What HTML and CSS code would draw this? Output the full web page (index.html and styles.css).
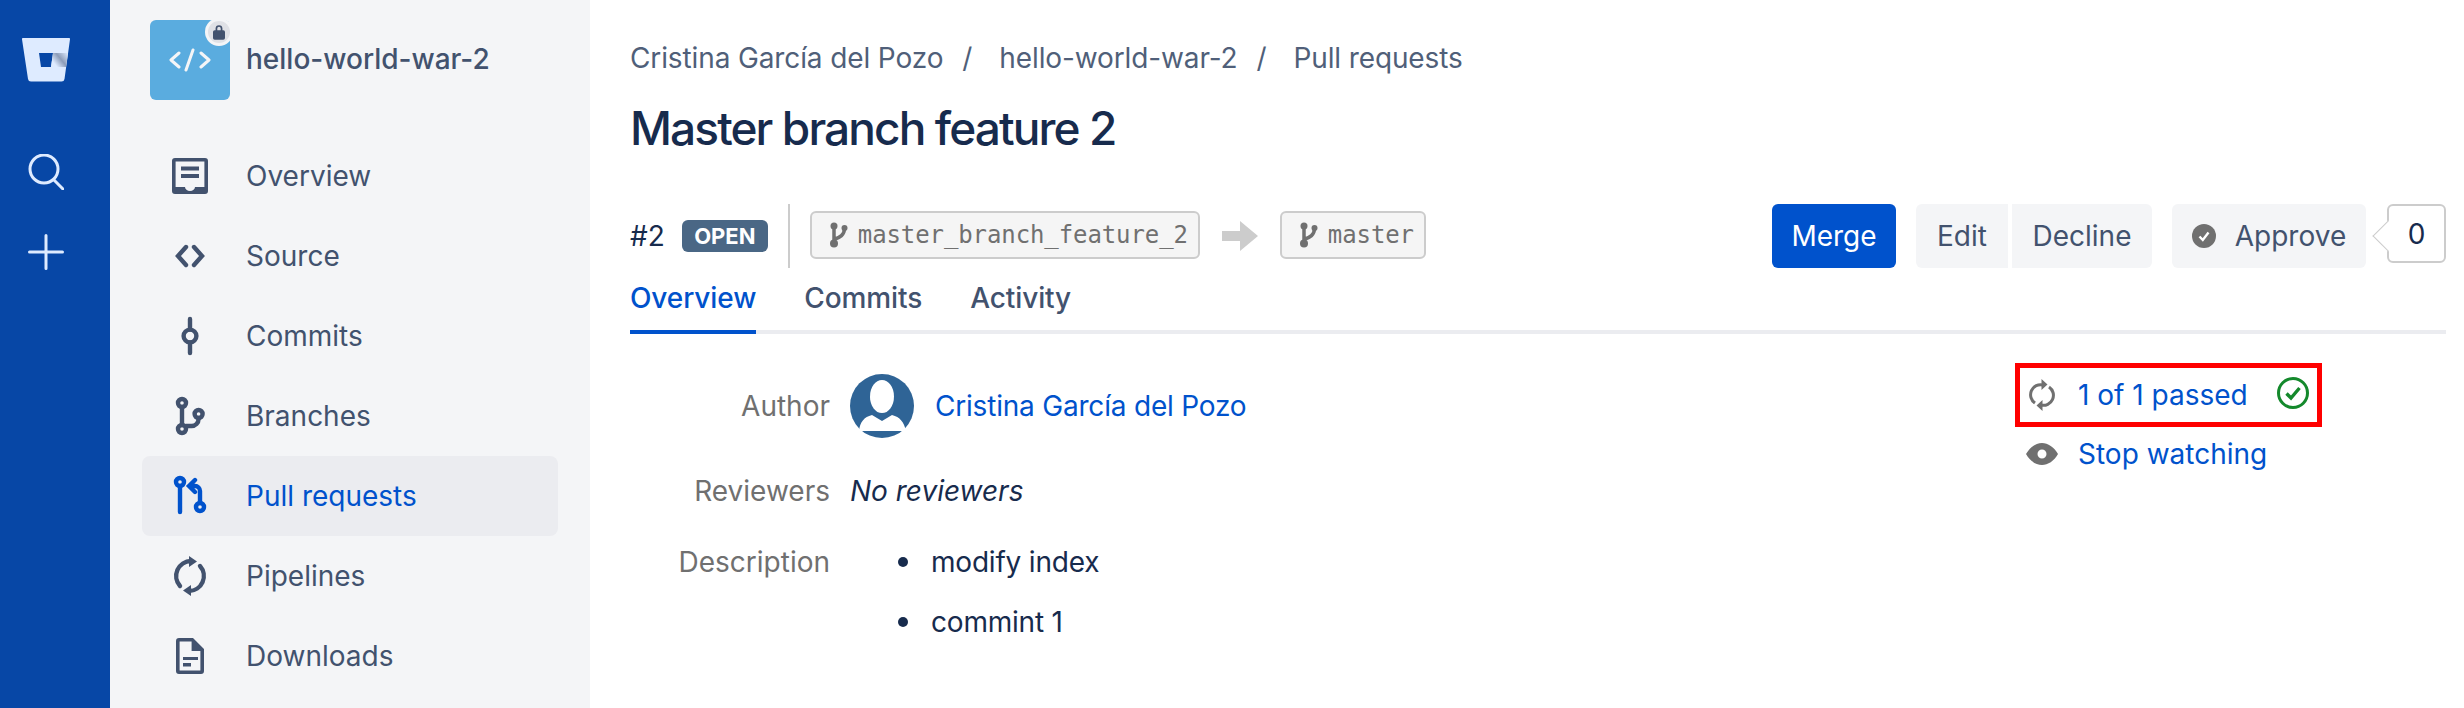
FILE: index.html
```html
<!DOCTYPE html>
<html lang="en">
<head>
  <meta charset="UTF-8" />
  <title>Master branch feature 2</title>
  <link rel="stylesheet" href="styles.css">
</head>
<body>
  <nav class="global-nav">
    <svg class="logo" width="48" height="44" viewBox="0 0 48 44">
      <defs>
        <linearGradient id="shade" x1="1" y1="0" x2="0.1" y2="0.6">
          <stop offset="0" stop-color="#deebff"/>
          <stop offset="0.55" stop-color="#8c9cb8"/>
          <stop offset="1" stop-color="#deebff"/>
        </linearGradient>
      </defs>
      <path fill="#deebff" fill-rule="evenodd" d="M1 0H47a1 1 0 0 1 1 1.200L42.500 41a3 3 0 0 1-3 2.500H9a3 3 0 0 1-3-2.500L0 1.200A1 1 0 0 1 1 0ZM17 15 19 29H29L31 15Z"/>
      <path fill="url(#shade)" d="M31 15H46L44 29H29Z"/>
    </svg>
    <svg class="nav-search" width="36" height="36" viewBox="0 0 36 36" fill="none" stroke="#deebff" stroke-width="3">
      <circle cx="16" cy="15" r="14"/>
      <path d="M26 26 35 35" stroke-linecap="round"/>
    </svg>
    <svg class="nav-plus" width="36" height="36" viewBox="0 0 36 36" fill="none" stroke="#deebff" stroke-width="3" stroke-linecap="round">
      <path d="M18 1.500V34.500M1.500 18H34.500"/>
    </svg>
  </nav>

  <aside class="sidebar">
    <div class="repo">
      <div class="repo-icon">
        <svg width="42" height="24" viewBox="0 0 42 24" fill="none" stroke="#f4f5f7" stroke-width="3" stroke-linecap="round" stroke-linejoin="round">
          <path d="M10 5 2 12 10 19M32 5 40 12 32 19M24 2 17 22"/>
        </svg>
        <span class="lock-badge">
          <svg width="12" height="16" viewBox="0 0 14 18">
            <path fill="none" stroke="#42526e" stroke-width="2" d="M4 8V5a3 3 0 0 1 6 0V8"/>
            <rect y="7" width="14" height="11" rx="2" fill="#42526e"/>
          </svg>
        </span>
      </div>
      <span class="repo-name">hello-world-war-2</span>
    </div>

    <ul class="side-menu">
      <li class="side-item">
        <svg class="side-icon" viewBox="0 0 24 24">
          <path fill-rule="evenodd" d="M4.500 3H19.500A1.500 1.500 0 0 1 21 4.500V19.500A1.500 1.500 0 0 1 19.500 21H4.500A1.500 1.500 0 0 1 3 19.500V4.500A1.500 1.500 0 0 1 4.500 3ZM4.800 4.800V17.500H9.500A2.500 2 0 0 0 14.500 17.500H19.200V4.800Z"/>
          <path d="M7.500 7.200H16.500V9.200H7.500ZM7.500 11H16.500V13H7.500Z"/>
        </svg>
        Overview
      </li>
      <li class="side-item">
        <svg class="side-icon line" viewBox="0 0 24 24"><path d="M10 7.500 6 12 10 16.500M14 7.500 18 12 14 16.500"/></svg>
        Source
      </li>
      <li class="side-item">
        <svg class="side-icon line" viewBox="0 0 24 24"><circle cx="12" cy="12" r="3.200"/><path d="M12 3.500V8.800M12 15.200V20.500"/></svg>
        Commits
      </li>
      <li class="side-item">
        <svg class="side-icon line" viewBox="0 0 24 24"><circle cx="8" cy="5.500" r="2"/><circle cx="16.300" cy="11" r="2"/><circle cx="8" cy="18.500" r="2"/><path d="M8 7.500V16.500M16.300 13V13.500A3.500 3.500 0 0 1 12.800 17H10"/></svg>
        Branches
      </li>
      <li class="side-item active">
        <svg class="side-icon line" viewBox="0 0 24 24"><circle cx="7" cy="5" r="2"/><circle cx="17" cy="17.500" r="2"/><path d="M7 7V20M17 15.500V9.500A2.500 2.500 0 0 0 14.500 7H12M14.500 4 11.500 7 14.500 10"/></svg>
        Pull requests
      </li>
      <li class="side-item">
        <svg class="side-icon line" viewBox="0 0 24 24"><path d="M12.500 4.500A7.500 7.500 0 0 0 7 17M11.500 19.500A7.500 7.500 0 0 0 17 7"/><path class="solid" d="M11.500 2 15.500 4.700 11.500 7.500ZM12.500 16.500 8.500 19.300 12.500 22Z"/></svg>
        Pipelines
      </li>
      <li class="side-item">
        <svg class="side-icon" viewBox="0 0 24 24">
          <path fill-rule="evenodd" d="M6.500 3H13.500L19 8.500V19.500A1.500 1.500 0 0 1 17.500 21H6.500A1.500 1.500 0 0 1 5 19.500V4.500A1.500 1.500 0 0 1 6.500 3ZM6.800 4.800V19.200H17.200V9.500H12.800V4.800Z"/>
          <path d="M8.500 12.500H16V14H8.500ZM8.500 15.500H12.500V17.300H8.500Z"/>
        </svg>
        Downloads
      </li>
    </ul>
  </aside>

  <main class="content">
    <div class="breadcrumbs">
      <span>Cristina García del Pozo</span><span class="sep">/</span><span>hello-world-war-2</span><span class="sep">/</span><span>Pull requests</span>
    </div>
    <h1 class="pr-title">Master branch feature 2</h1>

    <div class="pr-bar">
      <span class="pr-id">#2</span>
      <span class="lozenge">OPEN</span>
      <span class="bar-divider"></span>
      <span class="branch-chip">
        <svg class="branch-icon" width="20" height="26" viewBox="0 0 20 26"><circle cx="5" cy="4" r="3.500"/><circle cx="15.500" cy="6" r="3"/><circle cx="5" cy="21.500" r="4"/><path d="M5 4V21M15.500 6C15.500 13 11 15.500 5 17.500"/></svg>
        master_branch_feature_2
      </span>
      <svg class="branch-arrow" width="36" height="30" viewBox="0 0 36 30"><path d="M0 10H18V0L36 15 18 30V20H0Z"/></svg>
      <span class="branch-chip">
        <svg class="branch-icon" width="20" height="26" viewBox="0 0 20 26"><circle cx="5" cy="4" r="3.500"/><circle cx="15.500" cy="6" r="3"/><circle cx="5" cy="21.500" r="4"/><path d="M5 4V21M15.500 6C15.500 13 11 15.500 5 17.500"/></svg>
        master
      </span>

      <div class="pr-actions">
        <button class="btn primary">Merge</button>
        <div class="btn-group">
          <button class="btn edit">Edit</button>
          <button class="btn decline">Decline</button>
        </div>
        <button class="btn approve">
          <svg width="24" height="24" viewBox="0 0 24 24"><circle cx="12" cy="12" r="12" fill="#707070"/><path d="M7.500 12.500 10.800 16 16.500 8.500" fill="none" stroke="#fff" stroke-width="2.400"/></svg>
          Approve
        </button>
        <span class="approve-count">0</span>
      </div>
    </div>

    <div class="tabs">
      <span class="tab active">Overview</span>
      <span class="tab">Commits</span>
      <span class="tab">Activity</span>
    </div>

    <div class="pr-body">
      <div class="details">
        <div class="detail-label author-label">Author</div>
        <div class="author">
          <svg width="64" height="64" viewBox="0 0 64 64">
            <circle cx="32" cy="32" r="32" fill="#2f6496"/>
            <ellipse cx="32" cy="22.500" rx="12" ry="16.500" fill="#fff"/>
            <path fill="#fff" d="M9 57C10 48 14 43 22 41L32 47 42 41C50 43 54 48 56 57Z"/>
          </svg>
          <a class="link author-name">Cristina García del Pozo</a>
        </div>
        <div class="detail-label">Reviewers</div>
        <div class="no-reviewers">No reviewers</div>
        <div class="detail-label">Description</div>
        <ul class="description">
          <li>modify index</li>
          <li>commint 1</li>
        </ul>
      </div>

      <div class="pr-side">
        <div class="build-status">
          <svg width="26" height="32" viewBox="0 0 26 32" fill="none" stroke="#707070" stroke-width="3">
            <path d="M14 6A10 10 0 0 0 6 24M12 26A10 10 0 0 0 20 8"/>
            <path fill="#707070" stroke="none" d="M12.500 0 18.500 5.500 12.500 11ZM13.500 21 7.500 26.500 13.500 32Z"/>
          </svg>
          <a class="link">1 of 1 passed</a>
          <svg class="status-ok" width="32" height="32" viewBox="0 0 32 32" fill="none" stroke="#14892c">
            <circle cx="16" cy="16" r="14.500" stroke-width="3"/>
            <path d="M9.500 16.500 14 21 22.500 11" stroke-width="3.400"/>
          </svg>
        </div>
        <div class="watch">
          <svg width="32" height="22" viewBox="0 0 32 22">
            <path fill="#707070" fill-rule="evenodd" d="M0 11C4 4 10 0 16 0S28 4 32 11C28 18 22 22 16 22S4 18 0 11ZM16 6.500A4.500 4.500 0 1 0 16 15.500 4.500 4.500 0 1 0 16 6.500Z"/>
          </svg>
          <a class="link">Stop watching</a>
        </div>
      </div>
    </div>
  </main>
</body>
</html>
```

FILE: styles.css
```css
* {
  box-sizing: border-box;
}

html, body {
  height: 100%;
}

body {
  margin: 0;
  display: flex;
  overflow: hidden;
  background: white;
  color: #172b4d;
  font-family: Inter, 'Liberation Sans', sans-serif;
  font-size: 28px;
  line-height: 36px;
}

/* far left blue bar */
.global-nav {
  width: 110px;
  flex-shrink: 0;
  background: #0747a6;
  display: flex;
  flex-direction: column;
  align-items: center;
  padding-top: 38px;
  padding-right: 18px;
}

.nav-search {
  margin-top: 72px;
}

.nav-plus {
  margin-top: 44px;
}

/* repo sidebar */
.sidebar {
  width: 480px;
  flex-shrink: 0;
  background: #f4f5f7;
  color: #42526e;
  padding: 20px 32px 0;
}

.repo {
  display: flex;
  align-items: center;
  gap: 16px;
  padding-left: 8px;
}

.repo-icon {
  position: relative;
  width: 80px;
  height: 80px;
  background: #5aacdf;
  border-radius: 6px;
  display: flex;
  align-items: center;
  justify-content: center;
}

.lock-badge {
  position: absolute;
  top: 1px;
  right: 0;
  width: 22px;
  height: 22px;
  border-radius: 50%;
  background: #dfe1e6;
  box-shadow: 0 0 0 3px #f4f5f7;
  display: flex;
  align-items: center;
  justify-content: center;
}

.repo-name {
  font-weight: 500;
  margin-top: -2px;
}

.side-menu {
  list-style: none;
  margin: 36px 0 0;
  padding: 0;
}

.side-item {
  height: 80px;
  display: flex;
  align-items: center;
  gap: 32px;
  padding-left: 24px;
  border-radius: 8px;
}

.side-item.active {
  background: #ebecf0;
  color: #0052cc;
}

.side-icon {
  width: 48px;
  height: 48px;
  flex-shrink: 0;
  fill: currentColor;
}

.side-icon.line {
  fill: none;
  stroke: currentColor;
  stroke-width: 2.200;
  stroke-linecap: round;
}

.side-icon .solid {
  fill: currentColor;
  stroke: none;
}

/* main column */
.content {
  flex: 1;
  min-width: 0;
  padding: 40px 18px 0 40px;
}

.breadcrumbs {
  color: #505f79;
  display: flex;
  letter-spacing: -0.12px;
}

.sep {
  margin: 0 27px 0 19px;
}

.pr-title {
  margin: 24px 0 0;
  font-size: 46px;
  line-height: 56px;
  font-weight: 500;
  letter-spacing: -1.9px;
}

.pr-bar {
  display: flex;
  align-items: center;
  height: 64px;
  margin-top: 48px;
}

.pr-id {
  margin-right: 17px;
}

.lozenge {
  background: #4a6785;
  color: white;
  font-size: 22px;
  font-weight: 700;
  line-height: 32px;
  width: 86px;
  text-align: center;
  border-radius: 6px;
}

.bar-divider {
  width: 2px;
  height: 64px;
  background: #ccc;
  margin: 0 20px;
}

.branch-chip {
  display: flex;
  align-items: center;
  gap: 9px;
  height: 48px;
  margin-top: -2px;
  padding: 0 10px 0 17px;
  background: #f5f5f5;
  border: 2px solid #ccc;
  border-radius: 6px;
  color: #707070;
  font-family: 'DejaVu Sans Mono', 'Liberation Mono', monospace;
  font-size: 24px;
  letter-spacing: -0.1px;
}

.branch-icon {
  fill: #707070;
}

.branch-icon path {
  fill: none;
  stroke: #707070;
  stroke-width: 3.500;
}

.branch-arrow {
  margin: 0 22px;
  fill: #ccc;
}

.pr-actions {
  margin-left: auto;
  display: flex;
  align-items: flex-start;
  height: 64px;
}

.btn {
  height: 64px;
  padding: 0;
  width: 124px;
  border: none;
  border-radius: 6px;
  background: #f4f5f7;
  color: #42526e;
  font: inherit;
  cursor: pointer;
}

.btn.primary {
  background: #0052cc;
  color: white;
}

.btn.edit {
  width: 92px;
}

.btn.decline {
  width: 140px;
}

.btn-group {
  display: flex;
  gap: 4px;
  margin: 0 20px;
}

.btn-group .btn:first-child {
  border-radius: 6px 0 0 6px;
}

.btn-group .btn:last-child {
  border-radius: 0 6px 6px 0;
}

.btn.approve {
  width: 194px;
  display: flex;
  align-items: center;
  justify-content: center;
  gap: 19px;
}

.approve-count {
  position: relative;
  width: 59px;
  height: 59px;
  margin-left: 21px;
  border: 2px solid #ccc;
  border-radius: 6px;
  background: white;
  text-align: center;
  line-height: 56px;
}

.approve-count::before {
  content: "";
  position: absolute;
  left: -12px;
  top: 19px;
  width: 21px;
  height: 21px;
  background: white;
  border-left: 1px solid #ccc;
  border-bottom: 1px solid #ccc;
  transform: rotate(45deg);
}

.tabs {
  display: flex;
  gap: 48px;
  padding-top: 12px;
  border-bottom: 4px solid #ebecf0;
  color: #42526e;
  font-weight: 500;
  letter-spacing: -0.1px;
}

.tab {
  padding-bottom: 14px;
  margin-bottom: -4px;
  border-bottom: 4px solid transparent;
}

.tab.active {
  color: #0052cc;
  border-bottom-color: #0052cc;
}

.pr-body {
  display: flex;
  justify-content: space-between;
  padding-right: 124px;
}

.details {
  display: grid;
  grid-template-columns: 200px auto;
  column-gap: 20px;
  row-gap: 35px;
  align-content: start;
  margin-top: 40px;
}

.detail-label {
  text-align: right;
  color: #707070;
}

.author-label {
  align-self: center;
}

.author {
  display: flex;
  align-items: center;
  gap: 21px;
}

.link {
  color: #0052cc;
}

.author-name {
  letter-spacing: -0.2px;
}

.no-reviewers {
  font-style: italic;
}

.description {
  list-style: none;
  margin: 0;
  padding-left: 48px;
}

.description li {
  display: flex;
  align-items: center;
  gap: 23px;
  letter-spacing: -0.2px;
}

.description li::before {
  content: "";
  width: 10px;
  height: 10px;
  border-radius: 50%;
  background: #172b4d;
}

.description li + li {
  margin-top: 24px;
}

.pr-side {
  margin-top: 29px;
}

.build-status {
  display: flex;
  align-items: center;
  width: 307px;
  height: 64px;
  padding-left: 9px;
  border: 5px solid #f00;
}

.build-status .link {
  margin-left: 23px;
}

.status-ok {
  margin-left: 29px;
  margin-top: -4px;
}

.watch {
  display: flex;
  align-items: center;
  gap: 20px;
  margin-top: 9px;
  padding-left: 11px;
}
```
